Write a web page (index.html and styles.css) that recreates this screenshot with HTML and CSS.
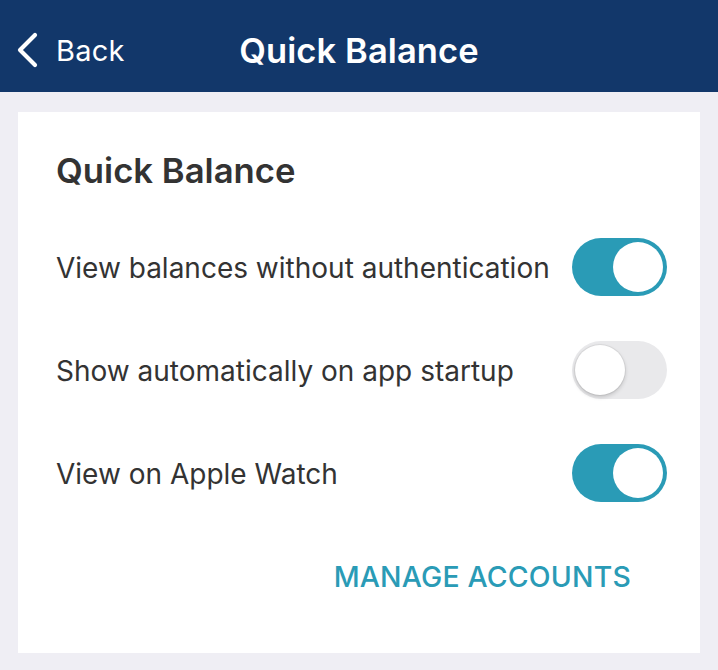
FILE: index.html
```html
<!DOCTYPE html>
<html lang="en">
<head>
<meta charset="utf-8">
<title>Quick Balance</title>
<link rel="stylesheet" href="styles.css">
</head>
<body>
<header class="nav">
  <a class="back" href="#">
    <svg class="chev" width="24" height="36" viewBox="0 0 24 36"><path d="M20 3 L5 18 L20 33" fill="none" stroke="#fff" stroke-width="4.2" stroke-linecap="round" stroke-linejoin="round"/></svg>
    <span class="back-label">Back</span>
  </a>
  <h1 class="nav-title">Quick Balance</h1>
</header>
<main class="card">
  <h2 class="card-title">Quick Balance</h2>
  <div class="row">
    <span class="label">View balances without authentication</span>
    <span class="toggle on"><span class="knob"></span></span>
  </div>
  <div class="row">
    <span class="label">Show automatically on app startup</span>
    <span class="toggle off"><span class="knob"></span></span>
  </div>
  <div class="row">
    <span class="label">View on Apple Watch</span>
    <span class="toggle on"><span class="knob"></span></span>
  </div>
  <div class="actions">
    <a class="manage" href="#">MANAGE ACCOUNTS</a>
  </div>
</main>
</body>
</html>
```
FILE: styles.css
```css
* { box-sizing: border-box; }
html, body { margin: 0; padding: 0; }
body {
  width: 718px;
  height: 670px;
  background: #efeef4;
  font-family: "Inter", "Noto Sans", sans-serif;
  color: #333333;
  overflow: hidden;
}
.nav {
  position: relative;
  height: 92px;
  background: #12376a;
  display: flex;
  align-items: center;
  justify-content: center;
  padding-top: 8px;
}
.back {
  position: absolute;
  left: 15px;
  top: 0;
  height: 92px;
  display: flex;
  align-items: center;
  gap: 17px;
  color: #fff;
  text-decoration: none;
  padding-top: 8px;
}
.chev { display: block; margin-top: 0; }
.back-label {
  font-size: 29px;
  font-weight: 400;
  letter-spacing: 0.2px;
}
.nav-title {
  margin: 0;
  color: #fff;
  font-size: 34.5px;
  font-weight: 600;
  letter-spacing: 0.1px;
}
.card {
  margin: 20px 18px 0;
  height: 541px;
  background: #ffffff;
  padding: 37px 33px 0 38px;
}
.card-title {
  margin: 0 0 24px;
  font-size: 34.7px;
  line-height: 42px;
  font-weight: 600;
  color: #333;
}
.row {
  height: 103px;
  display: flex;
  align-items: center;
  justify-content: space-between;
}
.label {
  font-size: 28px;
  font-weight: 400;
  color: #333;
  margin-top: 2px;
}
.toggle {
  position: relative;
  width: 95px;
  height: 58px;
  border-radius: 29px;
  flex: none;
}
.toggle.on { background: #2a9bb6; }
.toggle.off { background: #e9e9eb; }
.knob {
  position: absolute;
  top: 4px;
  width: 50px;
  height: 50px;
  border-radius: 50%;
  background: #fff;
}
.toggle.on .knob { right: 4px; }
.toggle.off .knob {
  left: 3px;
  box-shadow: 0 2px 4px rgba(0,0,0,0.18), 0 0 0 1px rgba(0,0,0,0.05);
}
.actions {
  display: flex;
  justify-content: flex-end;
  margin-top: 33px;
  padding-right: 36px;
}
.manage {
  font-size: 28.4px;
  line-height: 40px;
  font-weight: 500;
  color: #2a9bb6;
  text-decoration: none;
  letter-spacing: 0.2px;
}
```
